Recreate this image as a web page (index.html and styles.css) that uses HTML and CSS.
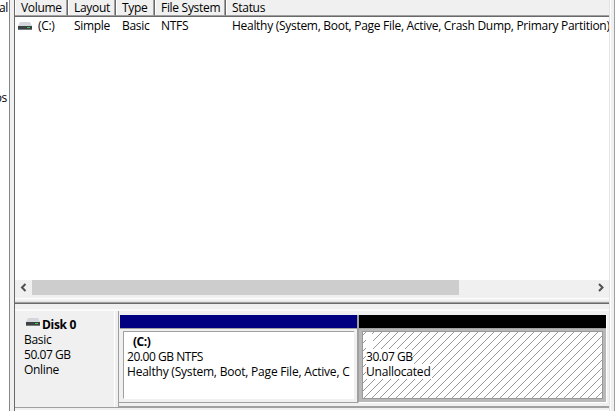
FILE: index.html
```
<!DOCTYPE html>
<html lang="en">
<head>
<meta charset="utf-8">
<title>Disk Management</title>
<link rel="stylesheet" href="styles.css">
</head>
<body>
<div class="window">
  <aside class="tree"><span class="tree-top">al</span><span class="tree-low">os</span></aside>
  <div class="splitter"></div>
  <main class="content">
    <section class="volumes">
      <div class="row head">
        <div class="cell">Volume</div><div class="cell">Layout</div><div class="cell">Type</div><div class="cell">File System</div><div class="cell">Status</div>
      </div>
      <div class="row item">
        <div class="cell drive">
          <svg class="icon" width="14" height="8" viewBox="0 0 14 8"><path d="M2 0h10l2 4H0z" fill="#d3d6da"/><path d="M0 4h14v4H0z" fill="#3c4144"/><path d="M0 7h14v1H0z" fill="#777b7e"/><path d="M9 5h3v1H9z" fill="#35d045"/></svg>
          <span>(C:)</span>
        </div>
        <div class="cell">Simple</div><div class="cell">Basic</div><div class="cell">NTFS</div><div class="cell"><span class="long">Healthy (System, Boot, Page File, Active, Crash Dump, Primary Partition)</span></div>
      </div>
      <div class="scrollbar">
        <svg width="17" height="15" viewBox="0 0 17 15"><path d="M10.500 4L7 7.500l3.500 3.500" fill="none" stroke="#505050" stroke-width="2"/></svg>
        <div class="thumb"></div>
        <svg width="17" height="15" viewBox="0 0 17 15"><path d="M7 4l3.500 3.500L7 11" fill="none" stroke="#505050" stroke-width="2"/></svg>
      </div>
    </section>
    <div class="divider"></div>
    <section class="disk">
      <div class="label">
        <div class="name">
          <svg class="icon" width="14" height="8" viewBox="0 0 14 8"><path d="M2 0h10l2 4H0z" fill="#d3d6da"/><path d="M0 4h14v4H0z" fill="#3c4144"/><path d="M0 7h14v1H0z" fill="#777b7e"/><path d="M9 5h3v1H9z" fill="#35d045"/></svg>
          <b>Disk 0</b>
        </div>
        <div>Basic</div>
        <div class="size">50.07 GB</div>
        <div>Online</div>
      </div>
      <div class="parts">
        <div class="part primary">
          <div class="bar"></div>
          <div class="box">
            <div class="vol"><b>(C:)</b></div>
            <div class="size">20.00 GB NTFS</div>
            <div class="health">Healthy (System, Boot, Page File, Active, C</div>
          </div>
        </div>
        <div class="part free">
          <div class="bar"></div>
          <div class="box">
            <svg class="hatch" width="239" height="66" shape-rendering="crispEdges"><defs><pattern id="diag" width="8" height="8" patternUnits="userSpaceOnUse"><path d="M2 0h1v1H2zM1 1h1v1H1zM0 2h1v1H0zM7 3h1v1H7zM6 4h1v1H6zM5 5h1v1H5zM4 6h1v1H4zM3 7h1v1H3z" fill="#999"/></pattern></defs><rect width="239" height="66" fill="url(#diag)"/></svg>
            <div class="blank"></div>
            <div class="mask m1 size">30.07 GB</div>
            <div class="mask m2 health">Unallocated</div>
          </div>
        </div>
      </div>
    </section>
    <div class="next"></div>
  </main>
  <div class="edge"></div>
</div>
</body>
</html>
```
FILE: styles.css
```
* { box-sizing: border-box; }
body { margin: 0; overflow: hidden; background: #f0f0f0; color: #000; font: 12px/15px "Open Sans", "Noto Sans", sans-serif; letter-spacing: -0.3px; }
.window { display: grid; grid-template-columns: 9px 5px 595px 6px; width: 615px; height: 411px; overflow: hidden; }
.tree { background: #fff; overflow: hidden; display: flex; flex-direction: column; align-items: flex-end; white-space: nowrap; padding-right: 1px; }
.tree-low { margin-top: 75px; padding-right: 1px; }
.splitter { background: #f0f0f0; border-left: 1px solid #828790; }
.content { border-left: 1px solid #696969; min-width: 0; overflow: hidden; }
.edge { border-left: 1px solid #e3e3e3; border-right: 1px solid #a0a0a0; box-shadow: inset 1px 0 #fff; }
.volumes { height: 295px; background: #fff; display: flex; flex-direction: column; }
.row { display: grid; grid-template-columns: 53px 48px 39px 71px 383px; flex: none; white-space: nowrap; overflow: hidden; }
.head { height: 17px; background: #f0f0f0; border-bottom: 1px solid #696969; }
.head .cell { border-right: 1px solid #696969; border-bottom: 1px solid #a0a0a0; box-shadow: inset -1px 0 #a0a0a0, inset 1px 0 #fff; padding-left: 6px; }
.head .cell:last-child { border-right: 0; box-shadow: inset 1px 0 #fff; }
.item { height: 18px; line-height: 18px; }
.item .cell { padding-left: 6px; }
.item .drive { display: flex; align-items: center; gap: 6px; padding-left: 3px; }
.item .icon { margin-top: -1px; }
.long { letter-spacing: -0.29px; }
.size { letter-spacing: -0.45px; }
.health { letter-spacing: -0.21px; }
.icon { display: block; flex: none; }
.scrollbar { margin-top: auto; height: 15px; display: grid; grid-template-columns: 17px 427px 1fr 17px; background: #f0f0f0; }
.scrollbar svg:last-child { grid-column: 4; }
.thumb { background: #cdcdcd; }
.divider { height: 14px; background: linear-gradient(#f0f0f0 0 3px, #fff 3px 4px, #f0f0f0 4px 6px, #e3e3e3 6px 7px, #a0a0a0 7px 8px, #696969 8px 9px, #f0f0f0 9px); }
.disk { height: 99px; display: grid; grid-template-columns: 103px 1fr; border-top: 2px solid #fafafa; border-bottom: 1px solid #a0a0a0; }
.label { border-right: 3px solid #f0f0f0; box-shadow: inset -1px 0 #fff; padding: 6px 0 0 9px; }
.name { display: flex; gap: 2px; padding-left: 2px; }
.name .icon { margin-top: 1px; }
.label > div { height: 15px; }
.parts { border-left: 1px solid #a0a0a0; border-bottom: 1px solid #a0a0a0; display: grid; grid-template-columns: 239px 249px; padding: 4px 0 3px; }
.part { display: flex; flex-direction: column; border-bottom: 1px solid #a0a0a0; }
.bar { height: 14px; border-bottom: 1px solid #a0a0a0; flex: none; }
.primary .bar { background: #000080; margin-left: 1px; }
.free .bar { background: #000; }
.primary { border-right: 1px solid #a0a0a0; box-shadow: inset -1px 0 #f0f0f0; }
.free { border-left: 1px solid #a0a0a0; border-right: 1px solid #fff; border-bottom-color: #fff; background: #b8b8b8; }
.box { margin: 2px 3px 0 4px; height: 68px; background: #fff; border: 1px solid #a0a0a0; padding: 2px 0 0 3px; white-space: nowrap; }
.primary .box { border-right: 0; border-bottom-color: #fff; }
.vol { padding-left: 6px; letter-spacing: -0.5px; }
.free .box { position: relative; margin-left: 3px; margin-right: 3px; border-color: #999; }
.hatch { position: absolute; left: 0; top: 0; }
.blank, .mask { position: relative; background: #fff; height: 15px; }
.blank { width: 7px; }
.m1 { width: 46px; }
.m2 { width: 66px; }
.next { height: 3px; border-bottom: 1px solid #fff; }
```
